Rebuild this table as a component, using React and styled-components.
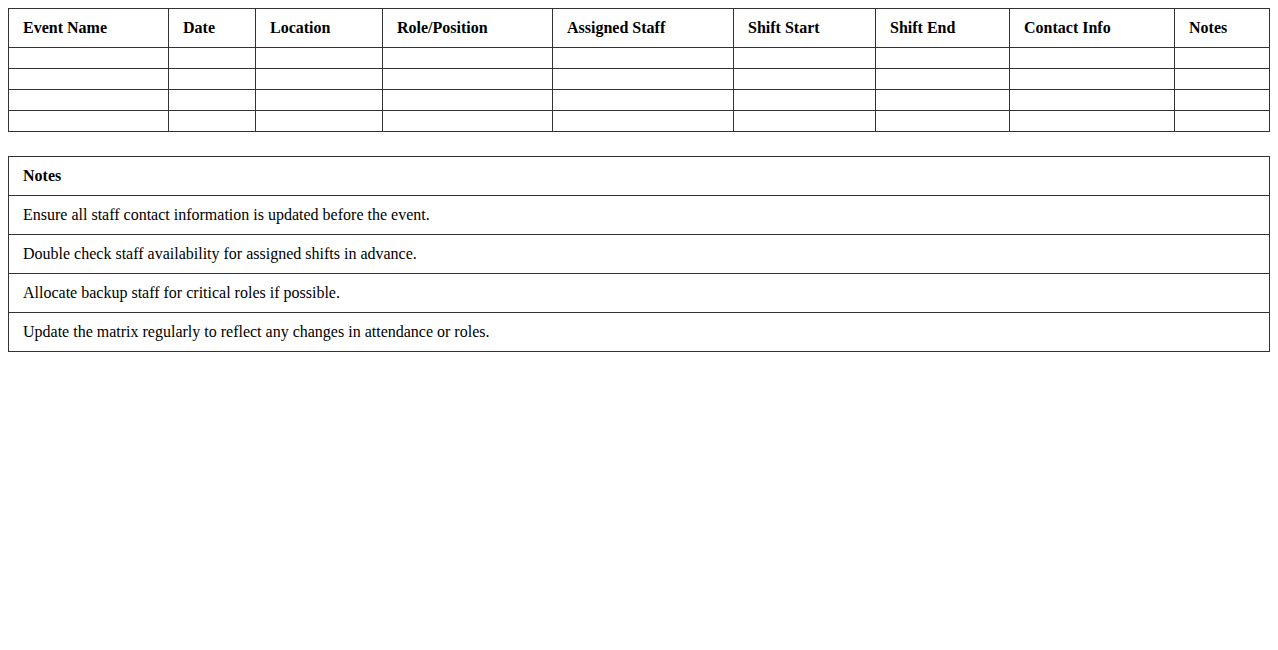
import React from "react";
import styled, { createGlobalStyle } from "styled-components";

const GlobalStyle = createGlobalStyle`
  body {
    margin: 8px;
    background: #fff;
    font-family: "Liberation Serif", "Times New Roman", serif;
    font-size: 16px;
    color: #000;
  }
`;

const Table = styled.table`
  width: 100%;
  border-collapse: collapse;
  margin-bottom: ${props => props.$gap || 0}px;
  table-layout: fixed;
`;

const HeadCell = styled.th`
  box-sizing: border-box;
  border: 1px solid #333;
  padding: 10px 14px;
  text-align: left;
  font-weight: bold;
  width: ${props => props.$w ? `${props.$w}px` : "auto"};
`;

const Cell = styled.td`
  border: 1px solid #333;
  padding: 10px 14px;
`;

// last column takes what is left
const columns = [
  {name: "Event Name", w: 160},
  {name: "Date", w: 87},
  {name: "Location", w: 127},
  {name: "Role/Position", w: 170},
  {name: "Assigned Staff", w: 181},
  {name: "Shift Start", w: 142},
  {name: "Shift End", w: 134},
  {name: "Contact Info", w: 165},
  {name: "Notes"},
];

const notes = [
  "Ensure all staff contact information is updated before the event.",
  "Double check staff availability for assigned shifts in advance.",
  "Allocate backup staff for critical roles if possible.",
  "Update the matrix regularly to reflect any changes in attendance or roles.",
];

export default function App() {
  return (
    <>
      <GlobalStyle/>
      <Table $gap={24}>
        <thead>
          <tr>
            {columns.map(c => <HeadCell key={c.name} $w={c.w}>{c.name}</HeadCell>)}
          </tr>
        </thead>
        <tbody>
          {[0, 1, 2, 3].map(r => (
            <tr key={r}>
              {columns.map(c => <Cell key={c.name}/>)}
            </tr>
          ))}
        </tbody>
      </Table>
      <Table>
        <thead>
          <tr><HeadCell>Notes</HeadCell></tr>
        </thead>
        <tbody>
          {notes.map(n => <tr key={n}><Cell>{n}</Cell></tr>)}
        </tbody>
      </Table>
    </>
  );
}
